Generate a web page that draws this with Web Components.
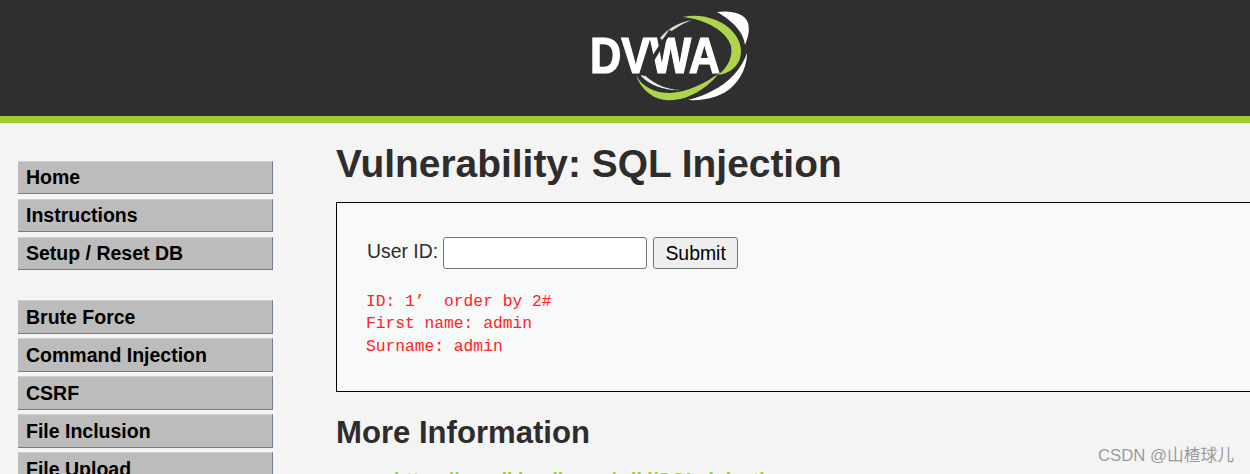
<!DOCTYPE html>
<html>
<head>
<meta charset="utf-8">
<title>DVWA</title>
<style>
html, body {
  margin: 0;
  height: 474px;
  overflow: hidden;
  background: #f4f4f4;
  color: #2e2c2c;
  font-family: "Liberation Sans", Arial, sans-serif;
}
</style>
</head>
<body>
<dvwa-page>
  <dvwa-header slot="header"></dvwa-header>
  <dvwa-menu slot="menu">
    <dvwa-menu-block>
      <dvwa-menu-item>Home</dvwa-menu-item>
      <dvwa-menu-item>Instructions</dvwa-menu-item>
      <dvwa-menu-item>Setup / Reset DB</dvwa-menu-item>
    </dvwa-menu-block>
    <dvwa-menu-block style="--item-height: 34px; --item-gap: 4px; --item-line: 32px">
      <dvwa-menu-item>Brute Force</dvwa-menu-item>
      <dvwa-menu-item>Command Injection</dvwa-menu-item>
      <dvwa-menu-item>CSRF</dvwa-menu-item>
      <dvwa-menu-item>File Inclusion</dvwa-menu-item>
      <dvwa-menu-item>File Upload</dvwa-menu-item>
    </dvwa-menu-block>
  </dvwa-menu>
  <dvwa-vuln-form>Vulnerability: SQL Injection</dvwa-vuln-form>
</dvwa-page>
<csdn-mark>CSDN @山楂球儿</csdn-mark>

<script>
// Page frame: header on top, menu and content side by side
customElements.define('dvwa-page', class extends HTMLElement {
  constructor () {
    super()
    this.attachShadow({ mode: 'open' })
    this.shadowRoot.innerHTML = `
      <style>
        :host { display: block; width: 1500px; }
        #columns { display: flex; }
        #left { flex: none; width: 336px; }
        #right { flex: 1; min-width: 0; }
      </style>
      <slot name="header"></slot>
      <div id="columns">
        <div id="left"><slot name="menu"></slot></div>
        <div id="right"><slot></slot></div>
      </div>`
  }
})

customElements.define('dvwa-header', class extends HTMLElement {
  constructor () {
    super()
    this.attachShadow({ mode: 'open' })
    this.shadowRoot.innerHTML = `
      <style>
        :host {
          display: block;
          width: 1250px;
          height: 116px;
          background: #2f2f2f;
          border-bottom: 7px solid #a2cd2c;
        }
        #logo { display: block; margin-left: 580px; }
      </style>
      <svg id="logo" width="180" height="116" viewBox="580 0 180 116">
        <defs><filter id="soft"><feGaussianBlur stdDeviation="0.7"/></filter></defs>
        <g filter="url(#soft)">
          <path fill="#fff" d="M717 12C730 10 745 13 748 23C750 30 748 38 745 45C744 36 738 24 717 12Z"/>
          <path fill="#fff" d="M688 100C705 101 722 97 733 86C742 77 747 65 747 53C742 68 730 82 712 91C705 95 696 98 688 100Z"/>
          <path fill="#ddd" d="M660 38C668 28 680 22 692 20C681 24 670 31 662 40Z"/>
          <path fill="#eee" d="M642 72C650 82 665 90 681 90C667 91 650 86 641 76Z"/>
          <text x="590" y="73" font-family="Liberation Sans, Arial, sans-serif" font-weight="700" font-size="50" fill="#fff" stroke="#fff" stroke-width="1.2" textLength="130" lengthAdjust="spacingAndGlyphs">DVWA</text>
          <path fill="#2f2f2f" d="M640 75L669 30L672 31L645 76Z"/>
          <path fill="#aed44c" d="M683 17C700 13 722 19 733 32C741 41 743 52 739 61C735 69 727 74 718 75C728 67 733 57 731 46C727 32 708 20 683 17Z"/>
          <path fill="#aed44c" d="M636 75C640 88 652 99 666 100C686 102 708 88 718 74C705 83 688 92 670 93C655 93 642 87 636 75Z"/>
        </g>
      </svg>`
  }
})

customElements.define('dvwa-menu', class extends HTMLElement {
  constructor () {
    super()
    this.attachShadow({ mode: 'open' })
    this.shadowRoot.innerHTML = `
      <style>
        :host {
          display: flex;
          flex-direction: column;
          gap: 30px;
          width: 255px;
          padding: 38px 0 0 18px;
        }
      </style>
      <slot></slot>`
  }
})

customElements.define('dvwa-menu-block', class extends HTMLElement {
  constructor () {
    super()
    this.attachShadow({ mode: 'open' })
    this.shadowRoot.innerHTML = `
      <style>:host { display: flex; flex-direction: column; gap: var(--item-gap, 5px); }</style>
      <slot></slot>`
  }
})

customElements.define('dvwa-menu-item', class extends HTMLElement {
  constructor () {
    super()
    this.attachShadow({ mode: 'open' })
    this.shadowRoot.innerHTML = `
      <style>
        :host {
          display: block;
          box-sizing: border-box;
          height: var(--item-height, 33px);
          padding-left: 8px;
          background: #bcbcbc;
          border-top: 1px solid #cfcfcf;
          border-right: 1px solid #6f7c92;
          border-bottom: 1px solid #6f7c92;
          color: #000;
          font: 700 19.5px/var(--item-line, 30px) "Liberation Sans", Arial, sans-serif;
          white-space: nowrap;
        }
      </style>
      <slot></slot>`
  }
})

// Main body: title, the SQL form box and the links under it
customElements.define('dvwa-vuln-form', class extends HTMLElement {
  constructor () {
    super()
    this.attachShadow({ mode: 'open' })
    this.shadowRoot.innerHTML = `
      <style>
        :host { display: block; font-size: 19.4px; }
        h1 { margin: 18px 0 16px; font-size: 38.9px; line-height: 45px; }
        h2 { margin: 21px 0 16px; font-size: 31.1px; line-height: 40px; }
        #box {
          box-sizing: border-box;
          height: 190px;
          padding: 34px 30px 0;
          background: #f8f9f9;
          border: 1px solid #000;
        }
        form { display: flex; align-items: flex-start; height: 32px; }
        label { margin-right: 5px; line-height: 28px; }
        input {
          box-sizing: border-box;
          width: 204px;
          height: 32px;
          margin: 0 6px 0 0;
          background: #fff;
          border: 1px solid #767676;
          border-radius: 3px;
        }
        button {
          box-sizing: border-box;
          width: 85px;
          height: 32px;
          padding: 0;
          background: #efefef;
          border: 1px solid #767676;
          border-radius: 3px;
          color: #000;
          font: 19.4px "Liberation Sans", Arial, sans-serif;
        }
        pre {
          margin: 22px 0 0 -1px;
          color: #f22;
          font: 16.28px/22.4px "Liberation Mono", "Courier New", monospace;
        }
        ul { margin: 0; padding: 0 0 0 58px; list-style: none; }
        a { color: #a2cd2c; font-weight: 700; text-decoration: none; }
      </style>
      <h1><slot></slot></h1>
      <div id="box">
        <form onsubmit="return false">
          <label>User ID:</label>
          <input type="text">
          <button type="button">Submit</button>
        </form>
        <pre>ID: 1’  order by 2#
First name: admin
Surname: admin</pre>
      </div>
      <h2>More Information</h2>
      <ul><li><a href="#">https://en.wikipedia.org/wiki/SQL_injection</a></li></ul>`
  }
})

customElements.define('csdn-mark', class extends HTMLElement {
  constructor () {
    super()
    this.attachShadow({ mode: 'open' })
    this.shadowRoot.innerHTML = `
      <style>
        :host {
          position: absolute;
          left: 1098px;
          top: 445px;
          color: rgba(130, 130, 130, 0.8);
          font: 16.75px/21px "Liberation Sans", "Noto Sans CJK SC", sans-serif;
          white-space: nowrap;
        }
      </style>
      <slot></slot>`
  }
})
</script>
</body>
</html>
